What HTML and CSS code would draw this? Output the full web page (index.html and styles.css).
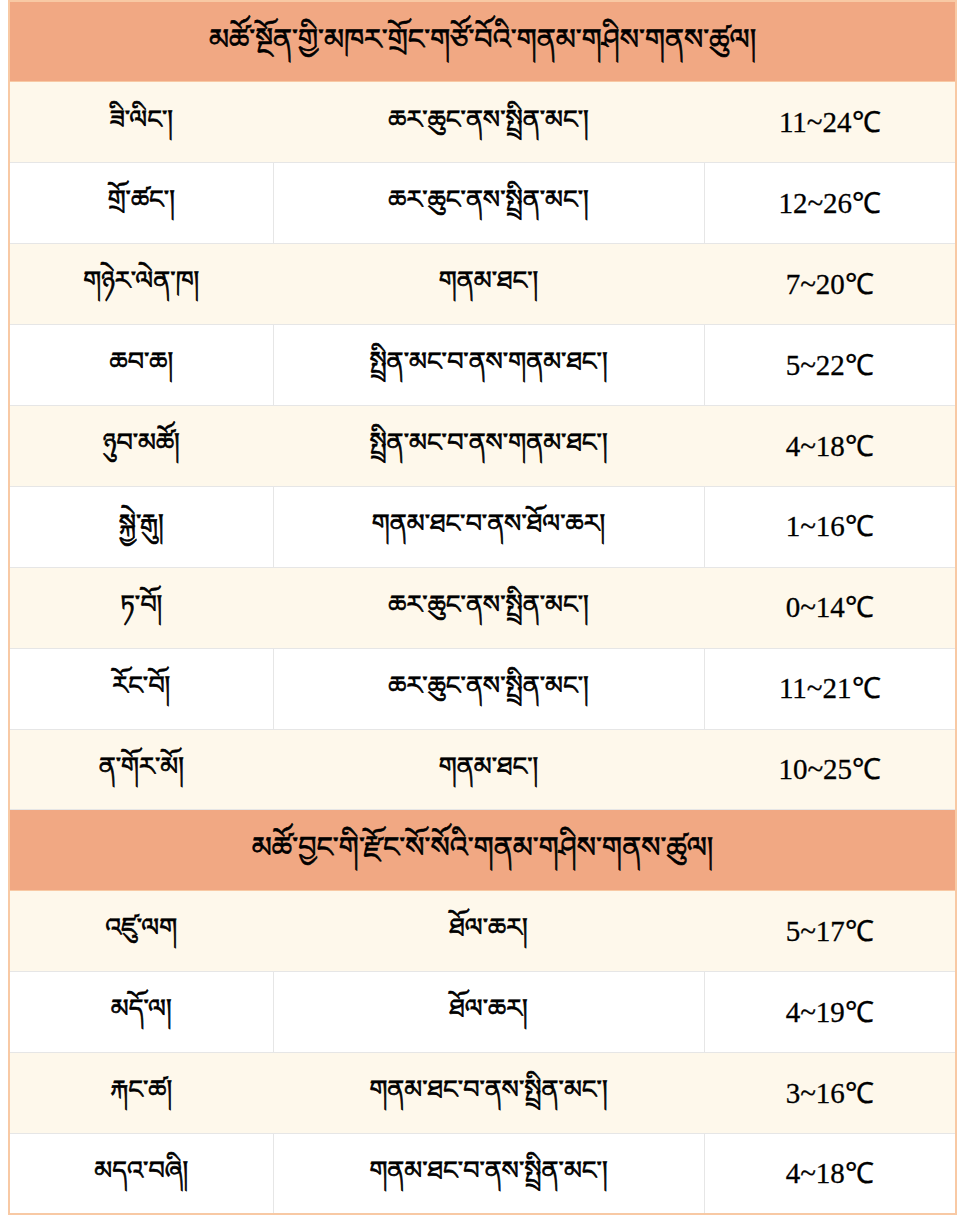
FILE: index.html
```html
<!DOCTYPE html>
<html lang="bo">
<head>
<meta charset="utf-8">
<title>གནམ་གཤིས་གནས་ཚུལ།</title>
<link rel="stylesheet" href="styles.css">
</head>
<body>
<div class="wrap">
<table class="weather">
  <colgroup>
    <col class="c1"><col class="c2"><col class="c3">
  </colgroup>
  <tbody>
    <tr class="head"><th colspan="3">མཚོ་སྔོན་གྱི་མཁར་གྲོང་གཙོ་བོའི་གནམ་གཤིས་གནས་ཚུལ།</th></tr>
    <tr class="odd"><td>ཟི་ལིང་།</td><td>ཆར་ཆུང་ནས་སྤྲིན་མང་།</td><td class="t">11~24℃</td></tr>
    <tr class="even"><td>གྲོ་ཚང་།</td><td>ཆར་ཆུང་ནས་སྤྲིན་མང་།</td><td class="t">12~26℃</td></tr>
    <tr class="odd"><td>གཉེར་ལེན་ཁ།</td><td>གནམ་ཐང་།</td><td class="t">7~20℃</td></tr>
    <tr class="even"><td>ཆབ་ཆ།</td><td>སྤྲིན་མང་བ་ནས་གནམ་ཐང་།</td><td class="t">5~22℃</td></tr>
    <tr class="odd"><td>ཉུབ་མཚོ།</td><td>སྤྲིན་མང་བ་ནས་གནམ་ཐང་།</td><td class="t">4~18℃</td></tr>
    <tr class="even"><td>སྐྱེ་རྒུ།</td><td>གནམ་ཐང་བ་ནས་ཐོལ་ཆར།</td><td class="t">1~16℃</td></tr>
    <tr class="odd"><td>ཏ་བོ།</td><td>ཆར་ཆུང་ནས་སྤྲིན་མང་།</td><td class="t">0~14℃</td></tr>
    <tr class="even"><td>རོང་བོ།</td><td>ཆར་ཆུང་ནས་སྤྲིན་མང་།</td><td class="t">11~21℃</td></tr>
    <tr class="odd"><td>ན་གོར་མོ།</td><td>གནམ་ཐང་།</td><td class="t">10~25℃</td></tr>
    <tr class="head"><th colspan="3">མཚོ་བྱང་གི་རྫོང་སོ་སོའི་གནམ་གཤིས་གནས་ཚུལ།</th></tr>
    <tr class="odd"><td>འཛུ་ལག</td><td>ཐོལ་ཆར།</td><td class="t">5~17℃</td></tr>
    <tr class="even"><td>མདོ་ལ།</td><td>ཐོལ་ཆར།</td><td class="t">4~19℃</td></tr>
    <tr class="odd"><td>རྐང་ཚ།</td><td>གནམ་ཐང་བ་ནས་སྤྲིན་མང་།</td><td class="t">3~16℃</td></tr>
    <tr class="even"><td>མདའ་བཞི།</td><td>གནམ་ཐང་བ་ནས་སྤྲིན་མང་།</td><td class="t">4~18℃</td></tr>
  </tbody>
</table>
</div>
</body>
</html>
```
FILE: styles.css
```css
html, body {
  margin: 0;
  padding: 0;
  background: #ffffff;
}
.wrap {
  padding: 0 8px;
}
.weather {
  width: 100%;
  border-collapse: collapse;
  table-layout: fixed;
  border: 2px solid #f8c9a4;
  font-family: "Noto Serif Tibetan", "Noto Sans Tibetan", "Jomolhari", "Microsoft Himalaya", "Liberation Serif", serif;
  color: #000;
}
.c1 { width: 264px; }
.c2 { width: 431px; }
.c3 { width: 252px; }
.weather th,
.weather td {
  height: 80.9px;
  padding: 9px 4px 0;
  text-align: center;
  vertical-align: middle;
  font-size: 25.5px;
  font-weight: 400;
  -webkit-text-stroke: 0.7px #000;
  line-height: 1.2;
  box-sizing: border-box;
}
.weather td {
  border: 1px solid #e6e6e6;
}
.head th {
  background: #f1a883;
  font-size: 28.5px;
  padding-top: 10px;
  border-bottom: 1px solid #f8c9a4;
}
.odd td {
  background: #fef8eb;
  border-left-color: #fef8eb;
  border-right-color: #fef8eb;
}
.even td {
  background: #ffffff;
}
.weather td.t {
  font-family: "Liberation Serif", "Times New Roman", serif;
  font-weight: 400;
  font-size: 29px;
  -webkit-text-stroke: 0.3px #000;
  padding-top: 0;
}
```
